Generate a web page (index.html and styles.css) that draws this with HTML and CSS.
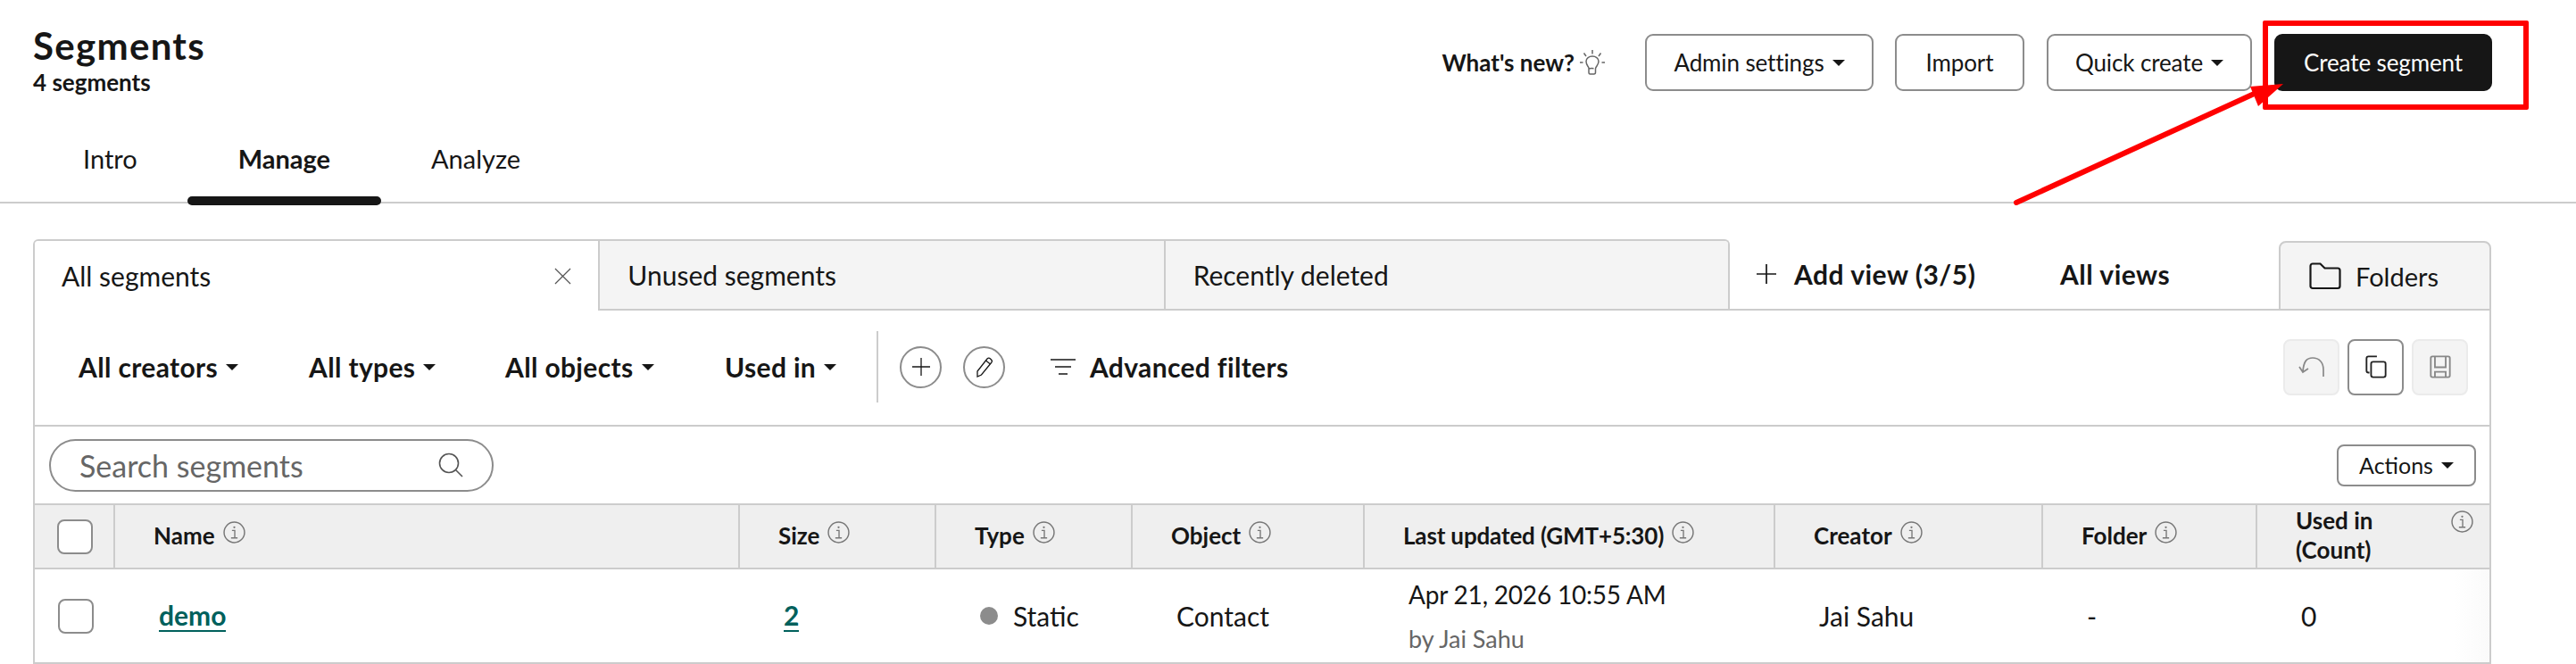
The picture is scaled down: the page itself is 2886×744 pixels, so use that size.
FILE: index.html
```html
<!DOCTYPE html>
<html lang="en">
<head>
<meta charset="utf-8">
<title>Segments</title>
<link rel="stylesheet" href="styles.css">
</head>
<body>
<svg class="defs" width="0" height="0" aria-hidden="true">
  <symbol id="info" viewBox="0 0 24 24">
    <circle cx="12" cy="12" r="11" fill="none" stroke="#777" stroke-width="1.4"/>
    <circle cx="12" cy="6.5" r="1.1" fill="#777"/>
    <path d="M9.5 10h3v8M8.5 18h7" fill="none" stroke="#777" stroke-width="1.3"/>
  </symbol>
</svg>
<div class="page">
  <header class="top">
    <div class="title">
      <h1>Segments</h1>
      <p>4 segments</p>
    </div>
    <div class="top-actions">
      <span class="whats-new">What's new?
        <svg class="bulb" viewBox="0 0 28 28" fill="none" stroke="#666" stroke-width="1.500">
          <path d="M14 0v4.500M4.500 3.500l2.500 3.500M23.500 3.500L21 7M0 14h3.500M24.500 14H28"/>
          <path d="M11.500 27c-1 0-1.500-.7-1.500-2v-4.500c0-2-3-3.200-3-7.700C7 9.300 10.300 7 14 7s7 2.300 7 5.800c0 4.200-3.200 5.500-3.500 8.200v4c0 1.300-.7 2-1.700 2zM10 21c2-.5 3.500-.5 5.500-.2"/>
        </svg>
      </span>
      <button class="btn btn-admin">Admin settings <i class="caret"></i></button>
      <button class="btn btn-import">Import</button>
      <button class="btn btn-quick">Quick create <i class="caret"></i></button>
      <button class="btn btn-primary">Create segment</button>
    </div>
  </header>

  <nav class="main-tabs">
    <a class="main-tab">Intro</a>
    <a class="main-tab is-active">Manage</a>
    <a class="main-tab">Analyze</a>
  </nav>

  <section class="panel">
    <div class="viewbar">
      <div class="view-tabs">
        <div class="view-tab is-active tab-a">All segments
          <svg class="close" viewBox="0 0 20 20" fill="none" stroke="#555" stroke-width="1.3"><path d="M1 1l18 18M19 1L1 19"/></svg>
        </div>
        <div class="view-tab tab-b">Unused segments</div>
        <div class="view-tab tab-c">Recently deleted</div>
      </div>
      <div class="view-extra">
        <span class="add-view">
          <svg class="plus-icon" viewBox="0 0 24 24" fill="none" stroke="#161616" stroke-width="1.700"><path d="M12 1v22M1 12h22"/></svg>
          Add view (3/5)
        </span>
        <span class="all-views">All views</span>
      </div>
      <div class="folders">
        <svg class="folder-icon" viewBox="0 0 36 31" fill="none" stroke="#161616" stroke-width="2.200"><path d="M1.500 4c0-1.500 1-2.500 2.500-2.500h8.500l5 5H32c1.500 0 2.500 1 2.500 2.500v17.500c0 1.500-1 2.500-2.500 2.500H4c-1.500 0-2.500-1-2.500-2.500z"/></svg>
        Folders
      </div>
    </div>

    <div class="filters">
      <span class="filter filter-creators">All creators <i class="caret"></i></span>
      <span class="filter filter-types">All types <i class="caret"></i></span>
      <span class="filter filter-objects">All objects <i class="caret"></i></span>
      <span class="filter filter-used">Used in <i class="caret"></i></span>
      <span class="filter-sep"></span>
      <span class="round-btn">
        <svg viewBox="0 0 24 24" fill="none" stroke="#161616" stroke-width="1.300"><path d="M12 2v20M2 12h20"/></svg>
      </span>
      <span class="round-btn">
        <svg viewBox="0 0 24 24" fill="none" stroke="#161616" stroke-width="1.300"><path d="M4 23l0-6L15 3c1-1 2.500-1 3.500 0l1 1c1 1 1 2.500 0 3.500L8.500 21zM13.500 5l5 4"/></svg>
      </span>
      <span class="advanced">
        <svg class="filter-icon" viewBox="0 0 28 18" fill="none" stroke="#161616" stroke-width="1.700"><path d="M0 1h28M5 9h18M9 17h10"/></svg>
        Advanced filters
      </span>
      <div class="tool-group">
        <span class="tool is-disabled">
          <svg class="tool-undo" viewBox="0 0 30 24" fill="none" stroke="#888" stroke-width="1.700"><path d="M28 23v-8C28 7 23 2 16 2S6 6 5 17M1 12l4 6 6-4"/></svg>
        </span>
        <span class="tool">
          <svg viewBox="0 0 26 28" fill="none" stroke="#222" stroke-width="2"><path d="M5 21H4c-1.500 0-2.500-1-2.500-2.500V4C1.500 2.500 2.500 1.500 4 1.500h10"/><rect x="7" y="8" width="17.500" height="18.500" rx="2.500"/></svg>
        </span>
        <span class="tool is-disabled">
          <svg viewBox="0 0 26 28" fill="none" stroke="#888" stroke-width="2"><rect x="1.500" y="1.500" width="23" height="25" rx="2"/><path d="M6.500 2v12.500h13V2M6.500 26v-6h13v6"/></svg>
        </span>
      </div>
    </div>

    <div class="search-row">
      <label class="search">
        <span class="search-text">Search segments</span>
        <svg class="search-icon" viewBox="0 0 28 28" fill="none" stroke="#555" stroke-width="1.600"><circle cx="12" cy="12" r="10.500"/><path d="M19.500 19.500l7.500 7.500"/></svg>
      </label>
      <button class="actions-btn">Actions <i class="caret"></i></button>
    </div>

    <div class="table-row table-head">
      <div class="cell cell-check"><span class="checkbox"></span></div>
      <div class="cell">Name <svg class="info"><use href="#info"/></svg></div>
      <div class="cell">Size <svg class="info"><use href="#info"/></svg></div>
      <div class="cell">Type <svg class="info"><use href="#info"/></svg></div>
      <div class="cell">Object <svg class="info"><use href="#info"/></svg></div>
      <div class="cell cell-last">Last updated (GMT+5:30) <svg class="info"><use href="#info"/></svg></div>
      <div class="cell">Creator <svg class="info"><use href="#info"/></svg></div>
      <div class="cell">Folder <svg class="info"><use href="#info"/></svg></div>
      <div class="cell cell-used"><span>Used in<br>(Count)</span> <svg class="info"><use href="#info"/></svg></div>
    </div>

    <div class="table-row table-body">
      <div class="cell cell-check"><span class="checkbox"></span></div>
      <div class="cell"><a class="link link-name">demo</a></div>
      <div class="cell"><a class="link link-size">2</a></div>
      <div class="cell cell-type"><i class="dot"></i>Static</div>
      <div class="cell">Contact</div>
      <div class="cell cell-date"><span>Apr 21, 2026 10:55 AM</span><small>by Jai Sahu</small></div>
      <div class="cell">Jai Sahu</div>
      <div class="cell">-</div>
      <div class="cell cell-count">0</div>
    </div>
  </section>

  <div class="callout-box"></div>
  <svg class="callout-arrow" viewBox="0 0 320 150" width="320" height="150">
    <path d="M7 142L280 17" fill="none" stroke="#ff0000" stroke-width="6" stroke-linecap="round"/>
    <path d="M306 9L269 12L278 34z" fill="#ff0000"/>
  </svg>
</div>
</body>
</html>
```

FILE: styles.css
```css
* { box-sizing: border-box; }
html, body { margin: 0; padding: 0; background: #fff; }
body {
  font-family: "Lato", "Liberation Sans", sans-serif;
  color: #161616;
  font-size: 26px;
  width: 2886px;
  height: 744px;
  overflow: hidden;
}
.defs { position: absolute; }
.page { position: relative; height: 744px; overflow: hidden; }

.top {
  display: flex;
  justify-content: space-between;
  height: 140px;
  padding: 0 94px 0 37px;
}
.title h1 { margin: 27px 0 0; font-size: 42px; line-height: 48px; font-weight: 700; letter-spacing: 1.300px; }
.title p { margin: 1px 0 0; font-size: 26px; line-height: 32px; font-weight: 700; }
.top-actions { display: flex; align-items: center; height: 64px; margin-top: 38px; gap: 25px; }
.whats-new { display: flex; align-items: center; gap: 6px; font-weight: 700; margin-right: 20px; }
.bulb { width: 28px; height: 28px; }
.btn {
  height: 64px;
  display: flex;
  align-items: center;
  justify-content: center;
  gap: 9px;
  border: 2px solid #8c8c8c;
  border-radius: 9px;
  background: #fff;
  font: inherit;
  letter-spacing: -.12px;
  color: inherit;
  padding: 0;
}
.btn-admin { width: 256px; margin-right: -1px; }
.btn-import { width: 145px; }
.btn-quick { width: 230px; }
.btn-primary { width: 244px; background: #161616; border-color: #161616; color: #fff; }
.caret {
  display: inline-block;
  width: 0;
  height: 0;
  border-left: 7px solid transparent;
  border-right: 7px solid transparent;
  border-top: 7px solid #161616;
}

.main-tabs {
  display: flex;
  height: 88px;
  padding-left: 37px;
  border-bottom: 2px solid #ccc;
}
.main-tab {
  position: relative;
  padding: 16px 56px 0;
  font-size: 29px;
  line-height: 44px;
}
.main-tab.is-active { padding: 16px 57px 0; font-weight: 700; }
.main-tab.is-active::after {
  content: "";
  position: absolute;
  left: 0;
  right: 0;
  bottom: -4px;
  height: 10px;
  background: #161616;
  border-radius: 5px;
}

.panel { margin: 40px 95px 0 37px; }
.viewbar { display: flex; height: 80px; }
.view-tabs {
  display: flex;
  width: 1901px;
  border: 2px solid #ccc;
  border-bottom: 0;
  border-radius: 6px 6px 0 0;
  overflow: hidden;
}
.view-tab {
  display: flex;
  align-items: center;
  justify-content: space-between;
  padding: 0 30px 0 31px;
  font-size: 30px;
  background: #f4f4f4;
  border-left: 2px solid #ccc;
  border-bottom: 2px solid #ccc;
}
.view-tab.is-active { padding-left: 30px; background: #fff; border-left: 0; border-bottom: 0; }
.tab-a { width: 632px; }
.tab-b { width: 634px; }
.tab-c { width: 633px; }
.close { width: 19px; height: 19px; }
.view-extra {
  display: flex;
  align-items: center;
  width: 615px;
  padding-left: 29px;
  font-size: 30px;
  font-weight: 700;
  letter-spacing: .5px;
  border-bottom: 2px solid #ccc;
}
.add-view { display: flex; align-items: center; gap: 19px; width: 341px; }
.plus-icon { width: 24px; height: 24px; }
.folders {
  display: flex;
  align-items: center;
  gap: 16px;
  width: 238px;
  padding-left: 32px;
  font-size: 29px;
  background: #f4f4f4;
  border: 2px solid #ccc;
  border-radius: 8px 8px 0 0;
  margin-top: 2px;
}
.folder-icon { width: 36px; height: 31px; }

.filters {
  display: flex;
  align-items: center;
  height: 130px;
  padding: 0 24px 2px 49px;
  border: 2px solid #ccc;
  border-top: 0;
  font-size: 30px;
  font-weight: 700;
  letter-spacing: .35px;
}
.filter { display: flex; align-items: center; gap: 9px; }
.filter-creators { width: 258px; }
.filter-types { width: 220px; }
.filter-objects { width: 246px; }
.filter-used { width: 170px; }
.filter-sep { width: 2px; height: 80px; background: #ccc; margin-right: 24px; }
.round-btn {
  display: flex;
  align-items: center;
  justify-content: center;
  width: 47px;
  height: 47px;
  border: 2px solid #8c8c8c;
  border-radius: 50%;
  margin-right: 24px;
}
.round-btn svg { width: 24px; height: 24px; }
.advanced { display: flex; align-items: center; gap: 16px; margin-left: 27px; }
.filter-icon { width: 28px; height: 18px; }
.tool-group { display: flex; gap: 9px; margin-left: auto; }
.tool {
  display: flex;
  align-items: center;
  justify-content: center;
  width: 63px;
  height: 63px;
  border: 2px solid #8c8c8c;
  border-radius: 8px;
}
.tool svg { width: 26px; height: 26px; }
.tool .tool-undo { width: 30px; height: 24px; }
.tool.is-disabled { background: #f4f4f4; border-color: #ebebeb; }

.search-row {
  display: flex;
  align-items: center;
  justify-content: space-between;
  height: 86px;
  padding: 0 15px 0 16px;
  border-left: 2px solid #ccc;
  border-right: 2px solid #ccc;
}
.search {
  display: flex;
  align-items: center;
  justify-content: space-between;
  width: 498px;
  height: 59px;
  padding: 0 32px 0 32px;
  border: 2px solid #8c8c8c;
  border-radius: 30px;
}
.search-text { font-size: 34px; color: #666; }
.search-icon { width: 28px; height: 28px; }
.actions-btn {
  display: flex;
  align-items: center;
  justify-content: center;
  gap: 9px;
  width: 156px;
  height: 47px;
  background: #fff;
  border: 2px solid #8c8c8c;
  border-radius: 8px;
  font: inherit;
  font-size: 25px;
  color: inherit;
  padding: 0;
}

.table-row {
  display: grid;
  grid-template-columns: 88px 700px 220px 220px 260px 460px 300px 240px 1fr;
  border-left: 2px solid #ccc;
  border-right: 2px solid #ccc;
  border-bottom: 2px solid #ccc;
}
.cell { display: flex; align-items: center; }
.table-head {
  height: 74px;
  background: #efefef;
  border-top: 2px solid #ccc;
  font-size: 26px;
  font-weight: 700;
  line-height: 33px;
}
.table-head .cell {
  gap: 9px;
  padding-left: 43px;
  padding-bottom: 2px;
  border-left: 2px solid #ccc;
}
.table-head .cell-check { padding-left: 25px; padding-bottom: 0; border-left: 0; }
.table-head .info { margin-top: -8px; }
.table-head .cell-last { letter-spacing: -.15px; }
.table-head .cell-used { justify-content: space-between; padding-right: 18px; }
.table-head .cell-used .info { align-self: flex-start; margin-top: 6px; }
.info { width: 25px; height: 25px; flex: none; }
.checkbox {
  display: block;
  width: 40px;
  height: 39px;
  background: #fff;
  border: 2px solid #8c8c8c;
  border-radius: 8px;
}
.table-body { height: 106px; font-size: 30px; }
.table-body .cell { padding-left: 51px; }
.table-body .cell-check { padding-left: 26px; }
.link { color: #00605c; font-weight: 700; border-bottom: 2px solid #00605c; line-height: 34px; }
.cell-type { gap: 17px; }
.dot { width: 20px; height: 20px; border-radius: 50%; background: #8c8c8c; }
.cell-date { flex-direction: column; align-items: flex-start; justify-content: center; gap: 18px; line-height: 34px; font-size: 28px; letter-spacing: -.2px; }
.cell-date small { font-size: 27px; line-height: 30px; color: #666; letter-spacing: 0; }
.cell-count { background: linear-gradient(to right, #fff 85%, #fafafa); }

.callout-box {
  position: absolute;
  left: 2535px;
  top: 23px;
  width: 298px;
  height: 100px;
  border: 6px solid #ff0000;
  border-radius: 2px;
}
.callout-arrow {
  position: absolute;
  left: 2252px;
  top: 85px;
}
```
